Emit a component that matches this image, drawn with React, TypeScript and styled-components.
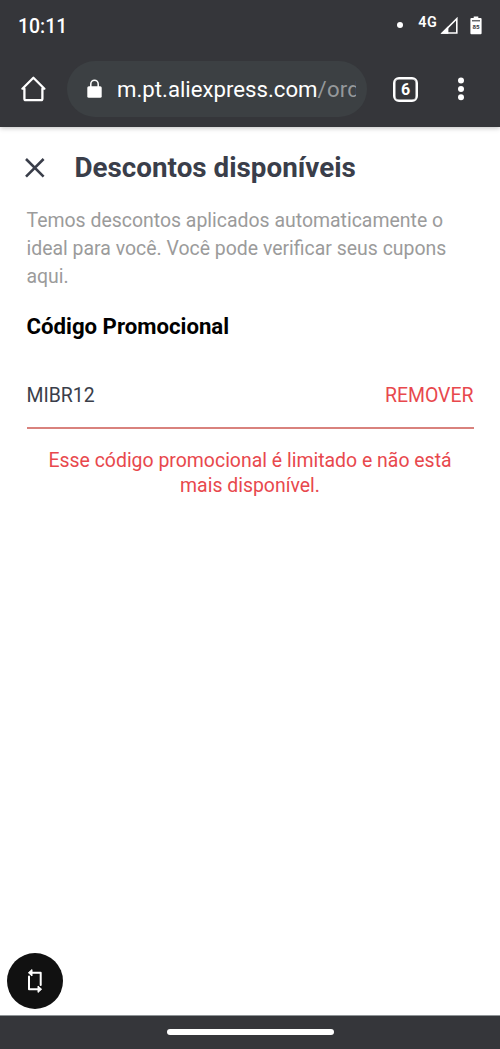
import { FC } from "react";
import styled, { createGlobalStyle } from "styled-components";

const colors = {
  chrome: "#35363a",
  urlBar: "#3c4043",
  titulo: "#3a3e4a",
  gris: "#9b9b9b",
  rojo: "#e8484d",
  linea: "#d9827d",
};

const App: FC = () => {
  return (
    <Screen>
      <GlobalStyle />

      <Header>
        <StatusBar>
          <Clock>10:11</Clock>
          <Dot />
          <Network>4G</Network>
          <SignalIcon />
          <BatteryIcon />
        </StatusBar>

        <Toolbar>
          <HomeIcon />
          <UrlBar>
            <LockIcon />
            <Url>
              m.pt.aliexpress.com<Path>/ord</Path>
            </Url>
          </UrlBar>
          <Tabs>6</Tabs>
          <MenuIcon />
        </Toolbar>
      </Header>

      <Content>
        <TitleRow>
          <CloseIcon />
          <Title>Descontos disponíveis</Title>
        </TitleRow>

        <Description>
          Temos descontos aplicados automaticamente o
          <br />
          ideal para você. Você pode verificar seus cupons
          <br />
          aqui.
        </Description>

        <Subtitle>Código Promocional</Subtitle>

        <CodeRow>
          <Code>MIBR12</Code>
          <Remove type="button">REMOVER</Remove>
        </CodeRow>

        <ErrorText>
          Esse código promocional é limitado e não está
          <br />
          mais disponível.
        </ErrorText>
      </Content>

      <RotateButton type="button" aria-label="Girar">
        <RotateIcon />
      </RotateButton>

      <NavBar>
        <Handle />
      </NavBar>
    </Screen>
  );
};

export default App;

const SignalIcon: FC = () => (
  <Signal width="18" height="18" viewBox="0 0 18 18">
    <path d="M16.8 1.7V16H2.5Z" fill="none" stroke="#fff" strokeWidth="1.6" />
    <path d="M0.6 16.8L8.4 9V16.8Z" fill="#fff" />
  </Signal>
);

const BatteryIcon: FC = () => (
  <Battery width="12" height="19" viewBox="0 0 12 19">
    <path
      d="M3.7 0.4H8.3V2H10.6Q11.6 2 11.6 3V17.2Q11.6 18.2 10.6 18.2H1.4Q0.4 18.2 0.4 17.2V3Q0.4 2 1.4 2H3.7Z"
      fill="#fff"
    />
    <path d="M2 4.8H10" stroke={colors.chrome} strokeWidth="1.1" />
    <text
      x="6"
      y="12.8"
      fontSize="6.2"
      fontWeight="700"
      textAnchor="middle"
      fill={colors.chrome}
    >
      85
    </text>
  </Battery>
);

const HomeIcon: FC = () => (
  <Home width="28" height="28" viewBox="0 0 28 28">
    <path
      d="M2.4 13.7L13.4 2.8L24.4 13.7H22.4V23.8Q22.4 25.2 21 25.2H5.8Q4.4 25.2 4.4 23.8V13.7Z"
      fill="none"
      stroke="#fff"
      strokeWidth="2.3"
      strokeLinejoin="round"
    />
  </Home>
);

const LockIcon: FC = () => (
  <Lock width="16" height="20" viewBox="0 0 16 20">
    <rect x="0.3" y="7.2" width="14.4" height="11.6" rx="1.6" fill="#fff" />
    <path
      d="M3.8 8V4.9A3.7 3.7 0 0 1 11.2 4.9V8"
      fill="none"
      stroke="#fff"
      strokeWidth="1.5"
    />
  </Lock>
);

const MenuIcon: FC = () => (
  <svg width="8" height="24" viewBox="0 0 8 24" fill="#fff">
    <circle cx="4" cy="3.6" r="3" />
    <circle cx="4" cy="12" r="3" />
    <circle cx="4" cy="20.3" r="3" />
  </svg>
);

const CloseIcon: FC = () => (
  <svg width="20" height="20" viewBox="0 0 20 20">
    <path
      d="M1 1L18.6 18.6M18.6 1L1 18.6"
      stroke={colors.titulo}
      strokeWidth="2.6"
    />
  </svg>
);

const RotateIcon: FC = () => (
  <svg width="18" height="26" viewBox="0 0 18 26">
    <g
      fill="none"
      stroke="#fff"
      strokeWidth="2"
      strokeLinecap="round"
      strokeLinejoin="round"
    >
      <path d="M6 4.8H14.7V17" />
      <path d="M3 8.6V21.2H11.5" />
    </g>
    <path
      d="M2.4 4.8L6 1.6V8ZM15.6 21.2L12 18V24.4Z"
      fill="#fff"
      stroke="#fff"
      strokeWidth="1"
      strokeLinejoin="round"
    />
  </svg>
);

const GlobalStyle = createGlobalStyle`
  body {
    margin: 0;
    background: #fff;
    font-family: Roboto, "Liberation Sans", sans-serif;
  }
`;

const Screen = styled.div`
  display: flex;
  flex-direction: column;
  position: relative;
  box-sizing: border-box;
  height: 1049px;
  overflow: hidden;
`;

const Header = styled.header`
  flex: none;
  height: 127px;
  background: ${colors.chrome};
  box-shadow: 0 1px 5px rgba(0, 0, 0, 0.25);
`;

const StatusBar = styled.div`
  display: flex;
  align-items: center;
  box-sizing: border-box;
  height: 52px;
  padding: 0 18px;

  color: #fff;
`;

const Clock = styled.span`
  flex: 1;
  font-size: 19.4px;
  font-weight: 500;
`;

const Dot = styled.span`
  width: 6px;
  height: 6px;
  margin: 0 15px 2px 0;
  border-radius: 50%;
  background: #fff;
`;

const Network = styled.span`
  margin-bottom: 8px;
  font-size: 14.4px;
  font-weight: 600;
  letter-spacing: 0.3px;
  line-height: 17px;
`;

const Signal = styled.svg`
  margin: 0 12px 1px 3px;
`;

const Battery = styled.svg`
  margin-bottom: 2px;
`;

const Toolbar = styled.div`
  display: flex;
  align-items: center;
  height: 74px;
  padding: 0 35px 0 20px;
`;

const Home = styled.svg`
  margin-right: 19px;
`;

const UrlBar = styled.div`
  display: flex;
  align-items: center;
  box-sizing: border-box;
  width: 300px;
  height: 56px;
  margin-right: 26px;
  padding: 0 11px 0 20px;
  border-radius: 28px;
  background: ${colors.urlBar};
`;

const Lock = styled.svg`
  flex: none;
  margin-right: 14px;
`;

const Url = styled.div`
  flex: 1;
  overflow: hidden;
  white-space: nowrap;

  color: #fff;
  font-size: 22.2px;
  line-height: 28px;
`;

const Path = styled.span`
  color: #95989b;
  letter-spacing: 0.2px;
`;

const Tabs = styled.div`
  display: flex;
  align-items: center;
  justify-content: center;
  box-sizing: border-box;
  width: 25px;
  height: 25px;
  margin-right: 39px;
  border: 2px solid #fff;
  border-radius: 6px;
  box-shadow: inset 0 0 0 0.5px #fff;

  color: #fff;
  font-size: 16px;
  font-weight: 700;
`;

const Content = styled.main`
  flex: 1;
  padding: 21px 26.5px 0;
`;

const TitleRow = styled.div`
  display: flex;
  align-items: center;
  gap: 30px;
  height: 40px;
  margin-left: -2px;
`;

const Title = styled.h1`
  margin: 0 0 2px;

  color: ${colors.titulo};
  font-size: 27.8px;
  font-weight: 700;
  white-space: nowrap;
`;

const Description = styled.p`
  margin: 19px 0 0;

  color: ${colors.gris};
  font-size: 19.44px;
  line-height: 27.8px;
  white-space: nowrap;
`;

const Subtitle = styled.h2`
  margin: 22px 0 0;

  color: #000;
  font-size: 22.2px;
  font-weight: 700;
  line-height: 28px;
`;

const CodeRow = styled.div`
  display: flex;
  align-items: center;
  justify-content: space-between;
  box-sizing: border-box;
  height: 67px;
  margin-top: 22px;
  padding-top: 2px;
  border-bottom: 2px solid ${colors.linea};
`;

const Code = styled.span`
  color: ${colors.titulo};
  font-size: 19.44px;
`;

const Remove = styled.button`
  padding: 0;
  border: none;
  background: none;

  color: ${colors.rojo};
  font-family: inherit;
  font-size: 19.44px;
`;

const ErrorText = styled.p`
  margin: 19px 0 0;

  color: ${colors.rojo};
  font-size: 19.44px;
  line-height: 25px;
  text-align: center;
  white-space: nowrap;
`;

/* floats over the page, above the navigation bar */
const RotateButton = styled.button`
  display: flex;
  align-items: center;
  justify-content: center;
  position: absolute;
  left: 7px;
  bottom: 40px;
  width: 56px;
  height: 56px;
  padding: 0;
  border: none;
  border-radius: 50%;
  background: #111;
`;

const NavBar = styled.footer`
  display: flex;
  justify-content: center;
  flex: none;
  box-sizing: border-box;
  height: 34px;
  padding-top: 13px;
  border-top: 1px solid #8e9396;
  background: ${colors.chrome};
`;

const Handle = styled.div`
  width: 167px;
  height: 6px;
  border-radius: 3px;
  background: #fff;
`;
